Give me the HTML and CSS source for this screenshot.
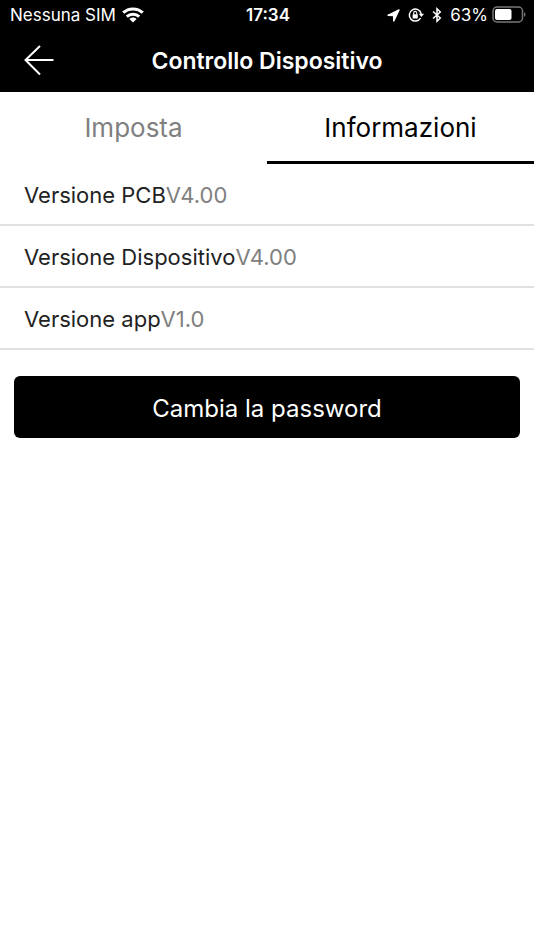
FILE: index.html
```html
<!DOCTYPE html>
<html lang="it">
<head>
    <meta charset="UTF-8">
    <meta name="viewport" content="width=device-width, initial-scale=1.0">
    <title>Controllo Dispositivo</title>
    <link rel="stylesheet" href="styles.css">
</head>
<body>
    <header>
        <div class="status-bar">
            <div class="carrier">
                <span>Nessuna SIM</span>
                <svg width="22" height="16" viewBox="0 0 22 16" fill="none" stroke="#fff" stroke-width="3" aria-hidden="true">
                    <path d="M1.2 5.7 C6.7 0.6 15.3 0.6 20.8 5.7"/>
                    <path d="M4.8 9.6 C8.2 6.4 13.8 6.4 17.2 9.6"/>
                    <path d="M7.4 12 C9.4 10 12.6 10 14.6 12 L11 15.6 Z" fill="#fff" stroke="none"/>
                </svg>
            </div>
            <time class="clock">17:34</time>
            <div class="indicators">
                <svg width="13" height="13" viewBox="0 0 13 13" aria-hidden="true">
                    <path d="M12 1 L1 6.3 L6.6 6.5 L6.8 12 Z" fill="#fff" stroke="#fff" stroke-width="1.4" stroke-linejoin="round"/>
                </svg>
                <svg width="16" height="16" viewBox="0 0 16 16" fill="none" stroke="#fff" stroke-width="1.5" aria-hidden="true">
                    <path d="M12.6 11 A6 6 0 1 1 13.2 6.8"/>
                    <path d="M10.8 6.8 H16 L13.4 10 Z" fill="#fff" stroke="none"/>
                    <rect x="4.6" y="7.2" width="5.2" height="4.2" rx="0.5" fill="#fff" stroke="none"/>
                    <path d="M5.7 7.6 V6 A1.5 1.6 0 0 1 8.7 6 V7.6" stroke-width="1.1"/>
                </svg>
                <svg width="10" height="16" viewBox="0 0 10 16" fill="none" stroke="#fff" stroke-width="1.5" aria-hidden="true">
                    <path d="M1 4.5 L8.3 11 L5 14.2 V1.8 L8.3 5 L1 11.5"/>
                </svg>
                <div class="battery">
                    <span>63%</span>
                    <svg width="34" height="18" viewBox="0 0 34 18" aria-hidden="true">
                        <rect x="1" y="1" width="29.5" height="15" rx="4" fill="none" stroke="#777" stroke-width="1.5"/>
                        <rect x="3" y="3" width="16.5" height="11" rx="2" fill="#fff"/>
                        <path d="M32 6 Q35 8.5 32 11 Z" fill="#777"/>
                    </svg>
                </div>
            </div>
        </div>
        <div class="nav-bar">
            <button class="back" type="button" aria-label="Indietro">
                <svg width="30" height="32" viewBox="0 0 30 32" fill="none" stroke="#fff" stroke-width="2" aria-hidden="true">
                    <path d="M16 1 L1.5 15 L16 29.5 M1.5 15 H29.5"/>
                </svg>
            </button>
            <h1>Controllo Dispositivo</h1>
        </div>
    </header>
    <nav class="tabs">
        <a class="tab" href="#imposta">Imposta</a>
        <a class="tab active" href="#informazioni" aria-current="page">Informazioni</a>
    </nav>
    <main>
        <dl class="versions">
            <div class="row"><dt>Versione PCB</dt><dd>V4.00</dd></div>
            <div class="row"><dt>Versione Dispositivo</dt><dd>V4.00</dd></div>
            <div class="row"><dt>Versione app</dt><dd>V1.0</dd></div>
        </dl>
        <button class="password" type="button">Cambia la password</button>
    </main>
</body>
</html>
```

FILE: styles.css
```css
body {
    font-family: Inter, sans-serif;
    margin: 0;
    background-color: #fff;
    color: #222;
}
header {
    background-color: #000;
    color: #fff;
}
svg {
    display: block;
}
.status-bar {
    display: grid;
    grid-template-columns: 1fr auto 1fr;
    align-items: center;
    height: 30px;
    padding: 0 8px 0 10px;
    font-size: 17px;
}
.carrier,
.indicators,
.battery {
    display: flex;
    align-items: center;
}
.carrier {
    gap: 6px;
}
.indicators {
    justify-content: flex-end;
    gap: 8px;
}
.battery {
    gap: 4px;
}
.clock {
    font-weight: 600;
}
.nav-bar {
    display: grid;
    grid-template-columns: 54px 1fr 54px;
    align-items: center;
    height: 62px;
}
.back {
    display: flex;
    justify-content: flex-end;
    padding: 0;
    border: none;
    background: none;
    cursor: pointer;
}
h1 {
    margin: 0;
    font-size: 23px;
    font-weight: 600;
    text-align: center;
}
.tabs {
    display: flex;
}
.tab {
    flex: 1;
    box-sizing: border-box;
    height: 72px;
    border-bottom: 3px solid transparent;
    line-height: 72px;
    font-size: 26px;
    text-align: center;
    text-decoration: none;
    color: #808080;
}
.tab.active {
    border-bottom-color: #000;
    color: #000;
}
.versions {
    margin: 0;
}
.row {
    display: flex;
    padding: 17px 24px 15px;
    border-bottom: 2px solid #e0e0e0;
    font-size: 22px;
    line-height: 28px;
}
dd {
    margin: 0;
    color: #808080;
}
.password {
    display: block;
    width: calc(100% - 28px);
    height: 62px;
    margin: 26px auto;
    padding: 2px 0 0;
    border: none;
    border-radius: 6px;
    background-color: #000;
    color: #fff;
    font-family: inherit;
    font-size: 24px;
    cursor: pointer;
}
```
